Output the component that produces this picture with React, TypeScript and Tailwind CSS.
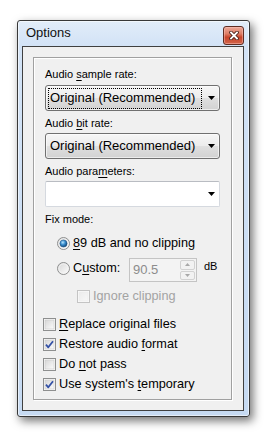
import React from "react";

const Radio = ({ checked, id }: { checked: boolean; id: string }) => (
  <svg width="13" height="13" viewBox="0 0 13 13" className="shrink-0">
    <defs>
      <linearGradient id={`ro-${id}`} x1="0" y1="0" x2="1" y2="1">
        <stop offset="0" stopColor="#d4d4d4" />
        <stop offset="1" stopColor="#ffffff" />
      </linearGradient>
      <radialGradient id={`rd-${id}`} cx="0.4" cy="0.35" r="0.7">
        <stop offset="0" stopColor="#b9e6fd" />
        <stop offset="0.45" stopColor="#3a8fd0" />
        <stop offset="1" stopColor="#0d3f70" />
      </radialGradient>
    </defs>
    <circle cx="6.5" cy="6.5" r="6" fill={`url(#ro-${id})`} stroke="#8e8f8f" strokeWidth="1" />
    <circle cx="6.5" cy="6.5" r="4.6" fill="none" stroke="#f4f4f4" strokeWidth="0.8" />
    {checked && <circle cx="6.5" cy="6.5" r="3.6" fill={`url(#rd-${id})`} stroke="#1b4f7e" strokeWidth="0.5" />}
  </svg>
);

const Check = ({ checked, disabled, id }: { checked?: boolean; disabled?: boolean; id: string }) => (
  <svg width="13" height="13" viewBox="0 0 13 13" className="shrink-0">
    <defs>
      <linearGradient id={`cb-${id}`} x1="0" y1="0" x2="1" y2="1">
        <stop offset="0" stopColor={disabled ? "#ececec" : "#d6d6d6"} />
        <stop offset="1" stopColor={disabled ? "#f8f8f8" : "#fcfcfc"} />
      </linearGradient>
    </defs>
    <rect x="0.5" y="0.5" width="12" height="12" fill="#fbfbfb" stroke={disabled ? "#c4c4c4" : "#8e8f8f"} />
    <rect x="2" y="2" width="9" height="9" fill={`url(#cb-${id})`} stroke={disabled ? "#ececec" : "#c8c8c8"} strokeWidth="0.6" />
    {checked && (
      <path d="M3 6.6 L5.3 9.3 L10 3.3" fill="none" stroke="#3451a6" strokeWidth="1.8" strokeLinejoin="round" />
    )}
  </svg>
);

const Arrow = () => (
  <svg width="7" height="4" viewBox="0 0 7 4" className="shrink-0">
    <path d="M0 0 H7 L3.5 4 Z" fill="#000" />
  </svg>
);

const ComboButton = ({ focused }: { focused?: boolean }) => (
  <div className="ml-[2px] w-[175px] h-[26px] rounded-[3px] border border-[#707070] bg-[linear-gradient(to_bottom,#f6f6f6_0%,#ececec_48%,#dfdfdf_52%,#d2d2d2_100%)] flex items-center pl-[2px] pr-[4px] shadow-[inset_0_0_0_1px_rgba(255,255,255,0.6)]">
    <div
      className={`h-[21px] w-[154px] flex items-center pl-[1px] text-[13px] leading-[16px] text-black ${
        focused ? "border border-dotted border-black" : "border border-transparent"
      }`}
    >
      Original (Recommended)
    </div>
    <div className="ml-auto">
      <Arrow />
    </div>
  </div>
);

const Label = ({ children }: { children: React.ReactNode }) => (
  <div className="ml-[2px] text-[11px] leading-[13px] text-black">{children}</div>
);

const CheckRow = ({ checked, id, children }: { checked?: boolean; id: string; children: React.ReactNode }) => (
  <div className="h-[16px] flex items-center gap-[3px]">
    <Check checked={checked} id={id} />
    <span className="text-[12.7px] leading-[16px] text-black whitespace-nowrap">{children}</span>
  </div>
);

const U = ({ children }: { children: React.ReactNode }) => (
  <span className="underline underline-offset-[2px] decoration-[1px]">{children}</span>
);

export default function App() {
  return (
    <div className="w-[269px] h-[440px] bg-white pt-[20px] pl-[17px] font-['Liberation_Sans',Arial,sans-serif]">
      <div className="w-[233px] h-[397px] flex flex-col border border-[#383838] rounded-[3px] bg-[linear-gradient(to_bottom,#e2edf9_0%,#d3e3f6_6%,#c6daf2_100%)] shadow-[3px_4px_10px_rgba(0,0,0,0.55),inset_0_0_0_1px_rgba(255,255,255,0.55)]">
        {/* Title bar */}
        <div className="h-[25px] flex items-start pl-[8px] shrink-0">
          <span className="mt-[4px] text-[13px] leading-[16px] text-[#111]">Options</span>
          <div className="ml-auto mt-[5px] mr-[5px] w-[21px] h-[19px] rounded-[3px] border border-[#5e2c22] bg-[linear-gradient(to_bottom,#eba898_0%,#de7e66_40%,#c8442a_60%,#d2654a_100%)] flex items-center justify-center shadow-[inset_0_0_0_1px_rgba(255,200,190,0.45)]">
            <svg width="10" height="9" viewBox="0 0 10 9">
              <path d="M2 1.5 L8 7.5 M8 1.5 L2 7.5" stroke="#4a231b" strokeWidth="3.6" strokeLinecap="square" />
              <path d="M2 1.5 L8 7.5 M8 1.5 L2 7.5" stroke="#ffffff" strokeWidth="1.8" strokeLinecap="square" />
            </svg>
          </div>
        </div>
        {/* Client area */}
        <div className="ml-[4px] mr-[5px] mb-[5px] h-[365px] border border-[#404040] bg-[#f0f0f0] pt-[10px] pl-[10px]">
          <div className="w-[199px] h-[343px] border border-[#a0a0a0] shadow-[inset_1px_1px_0_#ffffff,1px_1px_0_#ffffff] flex flex-col pt-[10px] pl-[9px]">
            <Label>
              Audio <U>s</U>ample rate:
            </Label>
            <div className="mt-[4px]">
              <ComboButton focused />
            </div>
            <div className="mt-[6px]">
              <Label>
                Audio <U>b</U>it rate:
              </Label>
            </div>
            <div className="mt-[3px]">
              <ComboButton />
            </div>
            <div className="mt-[6px]">
              <Label>
                Audio para<U>m</U>eters:
              </Label>
            </div>
            <div className="mt-[3px] ml-[2px] w-[175px] h-[26px] rounded-[2px] border border-[#d5d9df] border-t-[#b9bcc2] bg-white flex items-center justify-end pr-[4px]">
              <Arrow />
            </div>
            <div className="mt-[6px]">
              <Label>Fix mode:</Label>
            </div>
            {/* Radio 1 */}
            <div className="mt-[9px] ml-[14px] h-[16px] flex items-center gap-[3px]">
              <Radio checked id="r1" />
              <span className="text-[12.7px] leading-[16px] text-black whitespace-nowrap">
                <U>8</U>9 dB and no clipping
              </span>
            </div>
            {/* Radio 2 row */}
            <div className="mt-[7px] ml-[14px] h-[24px] flex items-start">
              <div className="mt-[2px] h-[16px] flex items-center gap-[3px] w-[72px]">
                <Radio checked={false} id="r2" />
                <span className="text-[12.7px] leading-[16px] text-black whitespace-nowrap">
                  C<U>u</U>stom:
                </span>
              </div>
              <div className="w-[68px] h-[24px] border border-[#c4c4c4] bg-[#f3f3f3] flex items-center">
                <span className="pl-[3px] text-[13px] leading-[16px] text-[#8c8c8c]">90.5</span>
                <div className="ml-auto h-full w-[17px] flex flex-col p-[1px] gap-[1px]">
                  <div className="flex-1 rounded-[2px] border border-[#d2d2d2] bg-[#f2f2f2] flex items-center justify-center">
                    <svg width="5" height="3" viewBox="0 0 5 3">
                      <path d="M0 3 L2.5 0 L5 3 Z" fill="#a8a8a8" />
                    </svg>
                  </div>
                  <div className="flex-1 rounded-[2px] border border-[#d2d2d2] bg-[#f2f2f2] flex items-center justify-center">
                    <svg width="5" height="3" viewBox="0 0 5 3">
                      <path d="M0 0 L5 0 L2.5 3 Z" fill="#a8a8a8" />
                    </svg>
                  </div>
                </div>
              </div>
              <span className="ml-[7px] mt-[2px] text-[11px] leading-[13px] text-black">dB</span>
            </div>
            {/* Ignore clipping */}
            <div className="mt-[6px] ml-[34px] h-[16px] flex items-center gap-[3px]">
              <Check disabled id="c0" />
              <span className="text-[12.7px] leading-[16px] text-[#a3a3a3] whitespace-nowrap">Ignore clipping</span>
            </div>
            <div className="mt-[12px] flex flex-col gap-[4px]">
              <CheckRow id="c1">
                <U>R</U>eplace original files
              </CheckRow>
              <CheckRow id="c2" checked>
                Restore audio <U>f</U>ormat
              </CheckRow>
              <CheckRow id="c3">
                Do <U>n</U>ot pass
              </CheckRow>
              <CheckRow id="c4" checked>
                Use system's <U>t</U>emporary
              </CheckRow>
            </div>
          </div>
        </div>
      </div>
    </div>
  );
}
